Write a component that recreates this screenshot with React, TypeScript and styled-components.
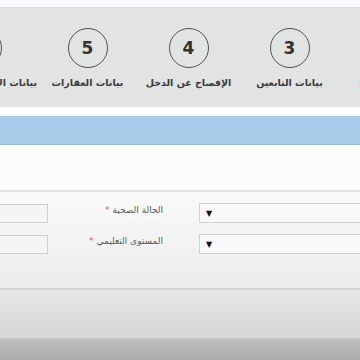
import React from 'react';
import styled, { createGlobalStyle } from 'styled-components';

const GlobalStyle = createGlobalStyle`
  html, body {
    margin: 0;
    padding: 0;
    width: 360px;
    height: 360px;
    overflow: hidden;
    background: #f8fafb;
    font-family: "DejaVu Sans", "Liberation Sans", sans-serif;
  }
`;

const Page = styled.div`
  width: 360px;
  height: 360px;
  display: flex;
  flex-direction: column;
  overflow: hidden;
`;

const TopStrip = styled.div`
  height: 7px;
  background: #f9fbfc;
  border-bottom: 1px solid #d9dcdd;
`;

const StepsBar = styled.div`
  height: 99px;
  background: #e2e3e3;
  overflow: hidden;
  display: flex;
  direction: rtl;
`;

const Step = styled.div<{ $first?: boolean }>`
  flex: 0 0 101px;
  margin-right: ${(p) => (p.$first ? '-81px' : '0')};
  display: flex;
  flex-direction: column;
  align-items: center;
  padding-top: 20px;
`;

const Circle = styled.div`
  width: 38px;
  height: 38px;
  border: 1.5px solid #505050;
  border-radius: 50%;
  display: flex;
  align-items: center;
  justify-content: center;
  font-family: "DejaVu Sans", sans-serif;
  font-weight: bold;
  font-size: 17px;
  color: #333;
`;

const StepLabel = styled.div<{ $active?: boolean }>`
  margin-top: 9px;
  font-size: 9.5px;
  font-weight: bold;
  color: ${(p) => (p.$active ? '#8a4a5a' : '#3a3a3a')};
  white-space: nowrap;
`;

const Gap = styled.div`
  height: 9px;
  background: #fdfefe;
`;

const BlueBar = styled.div`
  height: 28px;
  background: #a6cce9;
  border-bottom: 1px solid #97b9dd;
`;

const WhiteArea = styled.div`
  height: 45px;
  background: #fcfcfd;
  border-bottom: 2px solid #e2e2e2;
`;

const FormArea = styled.div`
  height: 98px;
  background: linear-gradient(#fafafa, #ececec);
  border-bottom: 2px solid #d2d2d2;
  display: flex;
  flex-direction: column;
  gap: 11px;
  padding-top: 11px;
  box-sizing: border-box;
`;

const Row = styled.div`
  display: flex;
  direction: rtl;
  align-items: center;
  height: 20px;
`;

const Select = styled.div`
  flex: 0 0 175px;
  height: 20px;
  margin-right: -14px;
  box-sizing: border-box;
  border: 1px solid #d2d2d2;
  background: #f8f8f8;
  display: flex;
  align-items: center;
  justify-content: flex-end;
  padding-left: 6px;
  font-size: 8px;
  color: #111;
`;

const Label = styled.div`
  flex: 0 0 115px;
  margin-right: 36px;
  margin-top: -6px;
  font-size: 9px;
  color: #5a5a5a;
  white-space: nowrap;
`;

const Star = styled.span`
  color: #e0506a;
  margin-right: 3px;
`;

const Input = styled.div`
  flex: 0 0 60px;
  height: 19px;
  box-sizing: border-box;
  border: 1px solid #cfcfcf;
  background: #f5f5f5;
`;

const GreyBand = styled.div`
  height: 48px;
  background: linear-gradient(#e6e6e6, #d6d6d6);
  border-bottom: 2px solid #c4c4c4;
`;

const Footer = styled.div`
  flex: 1;
  background: linear-gradient(#bdbdbd, #adadad);
`;

const steps = [
  { n: 2, label: 'بيانات الأسرة', active: true },
  { n: 3, label: 'بيانات التابعين' },
  { n: 4, label: 'الإفصاح عن الدخل' },
  { n: 5, label: 'بيانات العقارات' },
  { n: 6, label: 'بيانات الالتزامات المالية' },
];

const fields = ['الحالة الصحية', 'المستوى التعليمي'];

export default function App() {
  return (
    <Page>
      <GlobalStyle />
      <TopStrip />
      <StepsBar>
        {steps.map((s, i) => (
          <Step key={s.n} $first={i === 0}>
            <Circle>{s.n}</Circle>
            <StepLabel $active={s.active}>{s.label}</StepLabel>
          </Step>
        ))}
      </StepsBar>
      <Gap />
      <BlueBar />
      <WhiteArea />
      <FormArea>
        {fields.map((f) => (
          <Row key={f}>
            <Select>▼</Select>
            <Label>
              {f}
              <Star>*</Star>
            </Label>
            <Input />
          </Row>
        ))}
      </FormArea>
      <GreyBand />
      <Footer />
    </Page>
  );
}
